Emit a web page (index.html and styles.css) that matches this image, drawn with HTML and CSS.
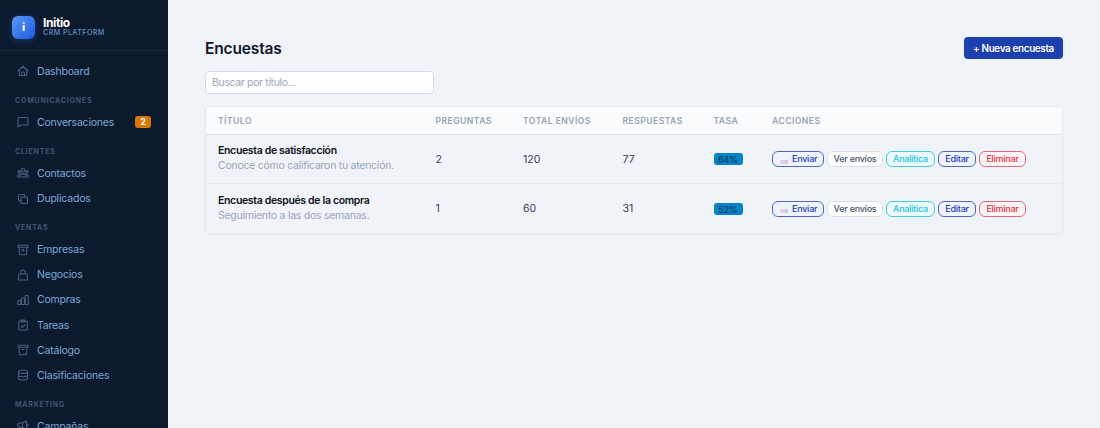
FILE: index.html
```html
<!DOCTYPE html>
<html lang="es">
<head>
    <meta charset="UTF-8">
    <meta name="viewport" content="width=device-width, initial-scale=1.0">
    <title>Encuestas - Initio</title>
    <link rel="stylesheet" href="styles.css">
</head>
<body>
    <aside class="sidebar">
        <div class="brand">
            <div class="brand-logo">i</div>
            <div>
                <div class="brand-name">Initio</div>
                <div class="brand-sub">CRM PLATFORM</div>
            </div>
        </div>
        <nav class="nav">
            <a class="nav-item"><svg viewBox="0 0 24 24"><path d="M2 12 12 2.500l10 9.500M4.500 10v11h15V10M9 21v-4q0-3 3-3t3 3v4"/></svg>Dashboard</a>
            <div class="nav-title">Comunicaciones</div>
            <a class="nav-item"><svg viewBox="0 0 24 24"><path d="M4 3h16q2 0 2 2v11q0 2-2 2H7l-5 4V5q0-2 2-2z"/></svg>Conversaciones<span class="count">2</span></a>
            <div class="nav-title">Clientes</div>
            <a class="nav-item"><svg viewBox="0 0 24 24"><circle cx="12" cy="6.500" r="3.500"/><circle cx="4.500" cy="9.500" r="2.300"/><circle cx="19.500" cy="9.500" r="2.300"/><path d="M6 20c0-9 12-9 12 0zM6 20H1c0-4 2-6 5-5.500M18 20h5c0-4-2-6-5-5.500"/></svg>Contactos</a>
            <a class="nav-item"><svg viewBox="0 0 24 24"><rect x="8" y="8" width="13" height="13" rx="2"/><path d="M16 8V5q0-2-2-2H5q-2 0-2 2v9q0 2 2 2h3"/></svg>Duplicados</a>
            <div class="nav-title">Ventas</div>
            <a class="nav-item"><svg viewBox="0 0 24 24"><path d="M2 2.500h20v4H2zM4 6.500l1 13q0 2 2 2h10q2 0 2-2l1-13M12 10v4m-2-2 2 2 2-2"/></svg>Empresas</a>
            <a class="nav-item"><svg viewBox="0 0 24 24"><path d="M4 10h16l1.500 12h-19zM7.500 10V6.500a4.500 4.500 0 0 1 9 0V10"/></svg>Negocios</a>
            <a class="nav-item"><svg viewBox="0 0 24 24"><rect x="1.500" y="13" width="6" height="8" rx="1"/><rect x="9" y="8" width="6" height="13" rx="1"/><rect x="16.500" y="3" width="6" height="18" rx="1"/></svg>Compras</a>
            <a class="nav-item"><svg viewBox="0 0 24 24"><rect x="3.500" y="4" width="17" height="18" rx="2"/><path d="M8.500 6V2h7v4zM8.500 14l2.500 2.500 5-5"/></svg>Tareas</a>
            <a class="nav-item"><svg viewBox="0 0 24 24"><path d="M2 2.500h20v4H2zM4 6.500l1 13q0 2 2 2h10q2 0 2-2l1-13M10 11h4"/></svg>Catálogo</a>
            <a class="nav-item"><svg viewBox="0 0 24 24"><ellipse cx="12" cy="5.500" rx="9" ry="3.500"/><path d="M3 5.500v13c0 4.500 18 4.500 18 0v-13M3 12c0 4.500 18 4.500 18 0"/></svg>Clasificaciones</a>
            <div class="nav-title">Marketing</div>
            <a class="nav-item"><svg viewBox="0 0 24 24"><path d="M11 6H6a4 4 0 0 0 0 9h5l8 4V2zM11 6v9M7 15l2 7h3l-1-7M22 8v5"/></svg>Campañas</a>
        </nav>
    </aside>

    <main class="content">
        <div class="page-header">
            <h1>Encuestas</h1>
            <button class="btn-new">+ Nueva encuesta</button>
        </div>
        <input class="search" type="text" placeholder="Buscar por título...">
        <div class="table-card">
            <table>
                <colgroup>
                    <col class="c-title"><col class="c-questions"><col class="c-sent"><col class="c-answers"><col class="c-rate"><col>
                </colgroup>
                <thead>
                    <tr>
                        <th>Título</th>
                        <th>Preguntas</th>
                        <th>Total envíos</th>
                        <th>Respuestas</th>
                        <th>Tasa</th>
                        <th>Acciones</th>
                    </tr>
                </thead>
                <tbody>
                    <tr>
                        <td>
                            <div class="survey-name">Encuesta de satisfacción</div>
                            <div class="survey-desc">Conoce cómo calificaron tu atención.</div>
                        </td>
                        <td>2</td>
                        <td>120</td>
                        <td>77</td>
                        <td><span class="rate">64%</span></td>
                        <td>
                            <div class="actions">
                                <button class="btn send"><i class="mail"></i>Enviar</button>
                                <button class="btn view">Ver envíos</button>
                                <button class="btn stats">Analítica</button>
                                <button class="btn edit">Editar</button>
                                <button class="btn delete">Eliminar</button>
                            </div>
                        </td>
                    </tr>
                    <tr>
                        <td>
                            <div class="survey-name">Encuesta después de la compra</div>
                            <div class="survey-desc">Seguimiento a las dos semanas.</div>
                        </td>
                        <td>1</td>
                        <td>60</td>
                        <td>31</td>
                        <td><span class="rate">52%</span></td>
                        <td>
                            <div class="actions">
                                <button class="btn send"><i class="mail"></i>Enviar</button>
                                <button class="btn view">Ver envíos</button>
                                <button class="btn stats">Analítica</button>
                                <button class="btn edit">Editar</button>
                                <button class="btn delete">Eliminar</button>
                            </div>
                        </td>
                    </tr>
                </tbody>
            </table>
        </div>
    </main>
</body>
</html>
```
FILE: styles.css
```css
* {
    box-sizing: border-box;
}
body {
    margin: 0;
    height: 428px;
    display: flex;
    overflow: hidden;
    background: #f0f4f9;
    font-family: Inter, "Liberation Sans", sans-serif;
    color: #0f172a;
}
button, input {
    font-family: inherit;
}

/* Sidebar */
.sidebar {
    width: 168px;
    flex-shrink: 0;
    background: #0c1a2e;
    overflow: hidden;
}
.brand {
    height: 51px;
    padding: 4px 12px 0;
    display: flex;
    align-items: center;
    gap: 8px;
    border-bottom: 1px solid #1a283b;
}
.brand-logo {
    width: 23px;
    height: 23px;
    border-radius: 6px;
    background: linear-gradient(135deg, #5598f5, #2358e0);
    box-shadow: 0 1px 6px rgba(37, 99, 235, 0.4);
    color: white;
    font-size: 11px;
    font-weight: 800;
    line-height: 23px;
    text-align: center;
}
.brand-name {
    color: white;
    font-size: 12px;
    font-weight: 700;
    line-height: 12px;
    letter-spacing: -0.4px;
}
.brand-sub {
    color: #6793c4;
    font-size: 7px;
    font-weight: 500;
    line-height: 8px;
    letter-spacing: 0.5px;
}
.nav {
    padding-top: 7.8px;
}
.nav-item {
    height: 25.2px;
    padding: 0 17px;
    display: flex;
    align-items: center;
    color: #7da8d8;
    font-size: 10.5px;
    letter-spacing: -0.2px;
}
.nav-item svg {
    width: 12px;
    height: 12px;
    margin-right: 8px;
    fill: none;
    stroke: #46607f;
    stroke-width: 2.2;
    stroke-linejoin: round;
    stroke-linecap: round;
}
.nav-title {
    height: 25.8px;
    padding: 11px 15px 0;
    color: #405672;
    font-size: 7px;
    font-weight: 700;
    line-height: 11px;
    letter-spacing: 0.8px;
    text-transform: uppercase;
}
.count {
    width: 16px;
    height: 12px;
    margin-left: auto;
    border-radius: 3px;
    background: #d97706;
    color: white;
    font-size: 8.5px;
    font-weight: 700;
    line-height: 12px;
    text-align: center;
}

/* Content */
.content {
    flex: 1;
    padding: 37px 37px 0;
}
.page-header {
    height: 22px;
    display: flex;
    align-items: center;
    justify-content: space-between;
}
h1 {
    margin: 2px 0 0;
    font-size: 15.5px;
    font-weight: 600;
    line-height: 20px;
    letter-spacing: -0.15px;
}
.btn-new {
    width: 99px;
    height: 22px;
    padding: 0;
    border: none;
    border-radius: 4px;
    background: #1e40af;
    color: white;
    font-size: 9.8px;
    font-weight: 600;
    letter-spacing: -0.3px;
}
.search {
    display: block;
    width: 229px;
    height: 23px;
    margin: 12px 0;
    padding: 0 6px 1px;
    border: 1px solid #d3dce7;
    border-radius: 4px;
    background: white;
    font-size: 10.5px;
    letter-spacing: -0.35px;
}
.search::placeholder {
    color: #9aa8bb;
}
.table-card {
    border: 1px solid #e2e8f0;
    border-radius: 5px;
    overflow: hidden;
    box-shadow: 0 1px 2px rgba(15, 23, 42, 0.03);
}
table {
    width: 100%;
    table-layout: fixed;
    border-collapse: separate;
    border-spacing: 0;
}
.c-title {
    width: 217.5px;
}
.c-questions {
    width: 87.5px;
}
.c-sent {
    width: 99.5px;
}
.c-answers {
    width: 91px;
}
.c-rate {
    width: 58.5px;
}
th {
    height: 28px;
    padding: 0 0 0 12px;
    background: #fafbfd;
    border-bottom: 1px solid #d9e2eb;
    color: #94a3b8;
    font-size: 8.6px;
    font-weight: 600;
    letter-spacing: 0.45px;
    text-align: left;
    text-transform: uppercase;
}
td {
    height: 49px;
    padding: 0 0 0 12px;
    border-bottom: 1px solid #e4eaf1;
    color: #334155;
    font-size: 10.5px;
}
tbody tr:last-child td {
    border-bottom: none;
}
.survey-name {
    color: #0b1220;
    font-size: 10.5px;
    font-weight: 600;
    line-height: 14px;
    letter-spacing: -0.34px;
}
.survey-desc {
    padding-bottom: 1px;
    color: #98a6ba;
    font-size: 10.5px;
    line-height: 15px;
    letter-spacing: -0.26px;
}
.rate {
    display: block;
    width: 29px;
    height: 12px;
    border-radius: 3px;
    background: #0284c7;
    color: #0c3558;
    font-size: 8.8px;
    font-weight: 500;
    line-height: 13px;
    text-align: center;
}
.actions {
    display: flex;
    gap: 3px;
}
.btn {
    height: 16px;
    padding: 0;
    border: 1px solid;
    border-radius: 6px;
    background: transparent;
    font-size: 9px;
    font-weight: 500;
    line-height: 14px;
    letter-spacing: -0.25px;
    white-space: nowrap;
}
.send {
    width: 52px;
    display: flex;
    align-items: center;
    padding-left: 7px;
    border-color: #5269b5;
    background: #eef3fd;
    color: #1e40af;
}
.mail {
    width: 8px;
    height: 4px;
    margin: 5px 4px 0 0;
    background: linear-gradient(to right, #e5d8ee, #cfc5e6);
}
.view {
    width: 56px;
    border-color: #d8e0ea;
    background: white;
    color: #475569;
}
.stats {
    width: 49px;
    border-color: #43cbdc;
    background: #ebfafd;
    color: #22c3dc;
}
.edit {
    width: 38px;
    border-color: #5269b5;
    background: #eef3fd;
    color: #1e40af;
}
.delete {
    width: 47px;
    border-color: #df6c7b;
    background: #fdf2f4;
    color: #dc3545;
}
```
